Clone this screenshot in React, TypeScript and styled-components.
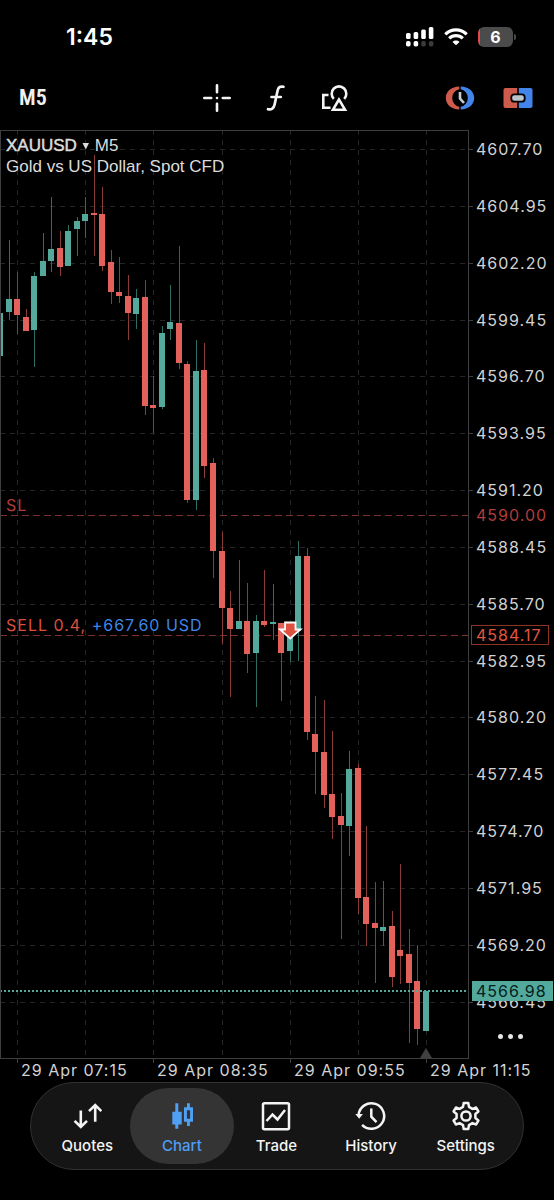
import React from "react";
import styled, { createGlobalStyle } from "styled-components";

const color = {
  bull: "#52a99c",
  bear: "#e2625b",
  bullWick: "#2f6d64",
  bearWick: "#8a3d39",
  frame: "#3c3e40",
  grid: "#232527",
  label: "#d2d2d2",
  accent: "#4f9ff5",
  profit: "#3f86e8",
  sell: "#d9503f",
};

const GlobalStyle = createGlobalStyle`
  * { box-sizing: border-box; }
  html { background: #000; }
  body { margin: 0; background: #000; color: #fff; font-family: Inter, "Liberation Sans", sans-serif; }
  button { appearance: none; border: 0; background: none; padding: 0; margin: 0; color: inherit; font: inherit; cursor: pointer; }
  svg { display: block; }
`;

const Screen = styled.main`
  display: flex;
  flex-direction: column;
  min-height: 100vh;
`;

const StatusBar = styled.header`
  display: flex;
  align-items: center;
  justify-content: space-between;
  height: 74px;
  padding: 0 38px 0 66px;
`;

const Clock = styled.time`
  font-size: 23px;
  line-height: 28px;
  font-weight: 600;
`;

const StatusIcons = styled.div`
  display: flex;
  align-items: center;
  gap: 10px;
`;

const Battery = styled.div`
  display: flex;
  align-items: center;
  gap: 1px;
  &::after {
    content: "";
    width: 2px;
    height: 6px;
    border-radius: 0 2px 2px 0;
    background: #4b4b4b;
  }
`;

const BatteryBody = styled.div`
  width: 35px;
  height: 20px;
  border-radius: 6px;
  background: linear-gradient(to right, #e5484a 2px, #4b4b4b 2px);
  text-align: center;
  font-size: 16px;
  line-height: 20px;
  font-weight: 700;
`;

const Toolbar = styled.nav`
  display: flex;
  align-items: center;
  justify-content: space-between;
  height: 48px;
  margin-bottom: 8px;
  padding: 0 21px 0 19px;
`;

const ToolGroup = styled.div<{ $gap: number }>`
  display: flex;
  align-items: center;
  gap: ${(p) => p.$gap}px;
`;

const SideGroup = styled(ToolGroup)<{ $end?: boolean }>`
  flex: 1 0 0;
  justify-content: ${(p) => (p.$end ? "flex-end" : "flex-start")};
`;

const Timeframe = styled.button`
  font-family: "Roboto Condensed", "Open Sans Condensed", "Arial Narrow", Roboto, sans-serif;
  font-size: 22px;
  line-height: 32px;
  font-weight: 600;
  color: #f0f0f0;
`;

const ChartArea = styled.section`
  position: relative;
`;

const ChartSvg = styled.svg`
  width: 100%;
  height: auto;
  font-family: Inter, sans-serif;
`;

const ChartText = styled.text`
  font-size: 16px;
  letter-spacing: 1px;
`;

const SymbolHeader = styled.div`
  position: absolute;
  top: 5px;
  left: 6px;
  color: #dcdcdc;
  font-family: "Liberation Sans", Arial, sans-serif;
  font-size: 17px;
  line-height: 21px;
`;

const SymbolButton = styled.button`
  display: flex;
  align-items: center;
  gap: 5px;
`;

const SymbolName = styled.span`
  -webkit-text-stroke: 0.5px currentColor;
`;

const MoreButton = styled.button`
  position: absolute;
  right: 29px;
  bottom: 35px;
  display: flex;
  gap: 5px;
  padding: 8px 2px;
`;

const Dot = styled.span`
  width: 5px;
  height: 5px;
  border-radius: 50%;
  background: #e6e6e6;
`;

const TabBar = styled.nav`
  display: grid;
  grid-template-columns: repeat(5, 1fr);
  margin: 0 30px 30px;
  padding: 5px 10px 5px 9px;
  border: 1px solid #313131;
  border-radius: 44px;
  background: #151515;
`;

const Tab = styled.button<{ $active?: boolean }>`
  display: flex;
  flex-direction: column;
  align-items: center;
  justify-content: center;
  gap: 5px;
  height: 76px;
  margin: 0 -5px;
  padding-top: 4px;
  border-radius: 38px;
  background: ${(p) => (p.$active ? "#343434" : "transparent")};
  color: ${(p) => (p.$active ? color.accent : "#f4f4f4")};
  font-size: 15px;
  line-height: 20px;
  font-weight: 500;
`;

/* [high, body top, body bottom, low, rising] in chart units, one entry per 5-minute bar */
type Candle = [number, number, number, number, 0 | 1];
const candles: Candle[] = [
  [313, 313, 356, 356, 1], [240, 299, 312, 320, 1], [272, 299, 315, 334, 0], [309, 317, 331, 331, 0],
  [272, 276, 330, 367, 1], [233, 261, 276, 276, 1], [197, 249, 261, 272, 1], [231, 248, 267, 276, 0],
  [225, 231, 266, 266, 1], [217, 221, 229, 256, 1], [197, 214, 221, 238, 1], [155, 213, 215, 256, 0],
  [187, 214, 266, 271, 0], [250, 262, 292, 304, 0], [257, 292, 296, 303, 0], [275, 296, 313, 340, 0],
  [289, 298, 314, 329, 1], [280, 297, 406, 415, 0], [376, 405, 408, 433, 0], [326, 333, 407, 409, 1],
  [285, 322, 329, 340, 1], [246, 323, 363, 369, 0], [361, 364, 500, 503, 0], [340, 371, 500, 510, 1],
  [343, 370, 466, 478, 0], [458, 463, 551, 578, 0], [532, 551, 608, 644, 0], [591, 608, 629, 697, 0],
  [560, 621, 629, 629, 1], [583, 621, 654, 673, 0], [615, 621, 653, 707, 1], [570, 621, 625, 627, 0],
  [584, 622, 624, 640, 1], [623, 623, 653, 701, 0], [630, 630, 651, 662, 1], [541, 556, 631, 661, 1],
  [548, 556, 732, 740, 0], [696, 734, 752, 794, 0], [700, 752, 795, 808, 0], [731, 794, 817, 839, 0],
  [793, 816, 825, 939, 0], [751, 769, 826, 856, 1], [764, 768, 898, 914, 0], [826, 897, 924, 946, 0],
  [882, 923, 928, 983, 0], [881, 927, 931, 946, 1], [911, 926, 977, 987, 0], [864, 950, 956, 984, 0],
  [929, 954, 983, 1043, 0], [945, 981, 1029, 1045, 0], [991, 991, 1031, 1031, 1],
];

const FRAME = { top: 130, right: 469, bottom: 1058 };
const TOP_PRICE = 4607.7;
const TOP_PRICE_Y = 149;
const STEP_PRICE = 2.75;
const UNITS_PER_DOLLAR = 20.67;
const barX = (i: number) => Math.round(i * 8.52);
const priceY = (p: number) => Math.round(TOP_PRICE_Y + (TOP_PRICE - p) * UNITS_PER_DOLLAR);
const prices = Array.from({ length: 16 }, (_, i) => TOP_PRICE - i * STEP_PRICE);
const gridBars = [2, 10, 18, 26, 34, 42, 50];
const timeLabels = [
  { bar: 2, text: "29 Apr 07:15" },
  { bar: 18, text: "29 Apr 08:35" },
  { bar: 34, text: "29 Apr 09:55" },
  { bar: 50, text: "29 Apr 11:15" },
];

function PriceChart() {
  const sl = priceY(4590);
  const entry = priceY(4584.17);
  const last = priceY(4566.98);
  return (
    <ChartSvg viewBox="0 130 554 952" role="img" aria-label="XAUUSD five minute candlestick chart">
      <g stroke={color.grid} strokeWidth="1" strokeDasharray="5 5" shapeRendering="crispEdges">
        {prices.map((p) => (
          <line key={p} x1="0" x2={FRAME.right} y1={priceY(p) + 0.5} y2={priceY(p) + 0.5} />
        ))}
        {gridBars.map((b) => (
          <line key={b} x1={barX(b) + 0.5} x2={barX(b) + 0.5} y1={FRAME.top} y2={FRAME.bottom} />
        ))}
      </g>
      <g strokeWidth="1" strokeDasharray="7 4" shapeRendering="crispEdges" stroke="#7c3029">
        <line x1="0" x2={FRAME.right} y1={sl + 0.5} y2={sl + 0.5} />
        <line x1="0" x2={FRAME.right} y1={entry + 0.5} y2={entry + 0.5} />
      </g>
      <g shapeRendering="crispEdges">
        {candles.map(([high, top, bottom, low, up], i) => (
          <g key={i}>
            <rect x={barX(i)} y={high} width="1" height={low - high} fill={up ? color.bullWick : color.bearWick} />
            <rect x={barX(i) - 3} y={top} width="6" height={bottom - top} fill={up ? color.bull : color.bear} />
          </g>
        ))}
      </g>
      <line x1="0" x2={FRAME.right} y1={last} y2={last} stroke={color.bull} strokeWidth="2" strokeDasharray="2 2" />
      <g fill="none" stroke={color.frame} shapeRendering="crispEdges">
        <path d="M0.5 130.5H468.5V1058.5H0.5Z" />
        {prices.map((p) => (
          <line key={p} x1="469" x2="473" y1={priceY(p) + 0.5} y2={priceY(p) + 0.5} />
        ))}
        {timeLabels.map(({ bar }) => (
          <line key={bar} x1={barX(bar) + 0.5} x2={barX(bar) + 0.5} y1="1058" y2="1063" />
        ))}
      </g>
      <path d="M420 1058L426 1048L432 1058Z" fill="#404040" />
      <path
        d="M285 622.500H295.500V629.500H300.500L290.200 638.500L280 629.500H285Z"
        fill="#e0503f"
        stroke="#fff"
        strokeWidth="1.800"
      />
      <g fill={color.label}>
        {prices.map((p) => (
          <ChartText key={p} x="476" y={priceY(p) + 6}>{p.toFixed(2)}</ChartText>
        ))}
        {timeLabels.map(({ bar, text }) => (
          <ChartText key={bar} x={barX(bar) + 4} y="1076">{text}</ChartText>
        ))}
      </g>
      <ChartText x="476" y={sl + 6} fill="#b23c3a">4590.00</ChartText>
      <rect x="471.500" y={entry - 9.5} width="77" height="19" fill="#000" stroke="#8f3424" />
      <ChartText x="476" y={entry + 6} fill="#e2563f">4584.17</ChartText>
      <rect x="472" y={last - 10} width="81" height="20" fill={color.bull} />
      <ChartText x="476" y={last + 6} fill="#04211d">4566.98</ChartText>
      <ChartText x="6" y={sl - 4} fill="#b23c3a">SL</ChartText>
      <ChartText x="6" y={entry - 4} fill={color.sell}>
        SELL 0.4, <tspan fill={color.profit}>+667.60 USD</tspan>
      </ChartText>
    </ChartSvg>
  );
}

const SignalIcon = () => (
  <svg width="28" height="20" viewBox="0 0 28 20" fill="#fff" aria-label="Signal">
    <rect x="0" y="6" width="4.600" height="6" rx="1.500" />
    <rect x="7.600" y="5" width="4.600" height="7" rx="1.500" />
    <rect x="15.200" y="2.500" width="4.600" height="9.500" rx="1.500" />
    <rect x="22.800" y="0" width="4.600" height="12" rx="1.500" />
    <rect x="0" y="14" width="4.600" height="5.500" rx="1.800" />
    <rect x="7.600" y="14" width="4.600" height="5.500" rx="1.800" />
    <rect x="15.200" y="14" width="4.600" height="5.500" rx="1.800" fill="#3a3a3a" />
    <rect x="22.800" y="14" width="4.600" height="5.500" rx="1.800" fill="#3a3a3a" />
  </svg>
);

const WifiIcon = () => (
  <svg width="24" height="18" viewBox="0 0 24 18" fill="none" stroke="#fff" strokeWidth="3.200" aria-label="Wi-Fi">
    <path d="M1.300 6.300C7.300 0.300 16.700 0.300 22.700 6.300" />
    <path d="M5.200 10.400C9 6.700 15 6.700 18.800 10.400" />
    <path d="M12 17.300L8.500 13.900C10.500 12 13.500 12 15.500 13.900Z" fill="#fff" stroke="none" />
  </svg>
);

const CrosshairIcon = () => (
  <svg width="28" height="28" viewBox="0 0 28 28" stroke="#f4f4f4" strokeWidth="2.600" strokeLinecap="round">
    <path d="M14 1.300V8.200M14 19.800V26.700M1.300 14H8.200M19.800 14H26.700M14 14V14.010" />
  </svg>
);

const FunctionIcon = () => (
  <svg width="20" height="28" viewBox="0 0 20 28" fill="none" stroke="#f4f4f4" strokeWidth="2.700" strokeLinecap="round">
    <path d="M17.500 2.800C14 2 12.300 3.300 11.500 7L8.600 20.500C7.700 24.500 5.500 26 2 25.200" />
    <path d="M5.500 13H14.800" />
  </svg>
);

const ObjectsIcon = () => (
  <svg width="28" height="28" viewBox="0 0 28 28" fill="none" stroke="#f4f4f4" strokeWidth="2.600">
    <path d="M7.500 11H2.300V23.700H9.500" />
    <path d="M12.800 14.800A7.300 7.300 0 1 1 23.200 14.800" />
    <path d="M18 15.500L12 25.700H24Z" />
  </svg>
);

const SessionIcon = () => (
  <svg width="30" height="24" viewBox="0 0 30 24" fill="none">
    <path d="M14.300 0.500C6.500 0.500 0.800 5.500 0.800 12C0.800 18.500 6.500 23.500 14.300 23.500V20.800A9 9 0 0 1 14.300 3.200Z" fill="#cf5b4d" />
    <path d="M15.700 0.500C23.500 0.500 29.200 5.500 29.200 12C29.200 18.500 23.500 23.500 15.700 23.500V20.800A9 9 0 0 0 15.700 3.200Z" fill="#4384ea" />
    <path d="M15 6V12.500L19 17" stroke="#c4cbd2" strokeWidth="2.600" />
  </svg>
);

const TradeTicketIcon = () => (
  <svg width="30" height="22" viewBox="0 0 30 22">
    <path d="M2.500 1H14.200V21H2.500A2 2 0 0 1 0.500 19V3A2 2 0 0 1 2.500 1Z" fill="#cf5b4d" />
    <path d="M15.800 1H27.500A2 2 0 0 1 29.500 3V19A2 2 0 0 1 27.500 21H15.800Z" fill="#4384ea" />
    <rect x="8.300" y="7.300" width="13.400" height="7.400" rx="3" fill="#bcc3ca" stroke="#000" strokeWidth="1.800" />
  </svg>
);

const QuotesIcon = () => (
  <svg width="30" height="30" viewBox="0 0 30 30" fill="none" stroke="currentColor" strokeWidth="2.600">
    <path d="M8.800 9.500V26M2.600 19.800L8.800 26L15 19.800" />
    <path d="M23.200 20.700V4M17 10.200L23.200 4L29.400 10.200" />
  </svg>
);

const ChartIcon = () => (
  <svg width="30" height="30" viewBox="0 0 30 30" fill="currentColor">
    <path d="M8.300 2.300H11.300V10.700H14.700V23.500H11.300V27.700H8.300V23.500H5.300V10.700H8.300Z" />
    <path d="M20 2.300H22.900V6.300H26V20.700H22.900V25H20V20.700H17V6.300H20ZM19.900 9.300V17.700H23.100V9.300Z" fillRule="evenodd" />
  </svg>
);

const TradeIcon = () => (
  <svg width="30" height="30" viewBox="0 0 30 30" fill="none" stroke="currentColor" strokeWidth="2.500">
    <rect x="2" y="2.200" width="26" height="26" rx="1.500" />
    <path d="M5.500 20L11.500 13.500L16.500 18.500L24 9" />
  </svg>
);

const HistoryIcon = () => (
  <svg width="30" height="30" viewBox="0 0 30 30" fill="none" stroke="currentColor" strokeWidth="2.500" overflow="visible">
    <path d="M2.600 14A12.800 12.800 0 1 1 6.100 23.900" />
    <path d="M-0.700 13L3.200 17.800L6.900 13Z" fill="currentColor" stroke="none" />
    <path d="M15.300 7.500V15.700L20.500 21.200" />
  </svg>
);

const SettingsIcon = () => {
  const teeth = 6;
  const point = (deg: number, r: number) => {
    const a = (deg * Math.PI) / 180;
    return `${(15 + r * Math.sin(a)).toFixed(2)} ${(15 - r * Math.cos(a)).toFixed(2)}`;
  };
  const outline = Array.from({ length: teeth }, (_, i) => {
    const c = i * 60;
    return [point(c - 18, 9.6), point(c - 10, 13.2), point(c + 10, 13.2), point(c + 18, 9.6)];
  }).flat();
  return (
    <svg width="30" height="30" viewBox="0 0 30 30" fill="none" stroke="currentColor" strokeWidth="2.500" strokeLinejoin="round">
      <path d={`M${outline.join("L")}Z`} />
      <circle cx="15" cy="15" r="4.600" />
    </svg>
  );
};

const tabs = [
  { name: "Quotes", Icon: QuotesIcon },
  { name: "Chart", Icon: ChartIcon },
  { name: "Trade", Icon: TradeIcon },
  { name: "History", Icon: HistoryIcon },
  { name: "Settings", Icon: SettingsIcon },
];

export default function App() {
  return (
    <Screen>
      <GlobalStyle />
      <StatusBar>
        <Clock>1:45</Clock>
        <StatusIcons>
          <SignalIcon />
          <WifiIcon />
          <Battery>
            <BatteryBody>6</BatteryBody>
          </Battery>
        </StatusIcons>
      </StatusBar>
      <Toolbar aria-label="Chart tools">
        <SideGroup $gap={0}>
          <Timeframe>M5</Timeframe>
        </SideGroup>
        <ToolGroup $gap={35}>
          <button aria-label="Crosshair"><CrosshairIcon /></button>
          <button aria-label="Indicators"><FunctionIcon /></button>
          <button aria-label="Objects"><ObjectsIcon /></button>
        </ToolGroup>
        <SideGroup $gap={28} $end>
          <button aria-label="Trading sessions"><SessionIcon /></button>
          <button aria-label="One click trading"><TradeTicketIcon /></button>
        </SideGroup>
      </Toolbar>
      <ChartArea>
        <PriceChart />
        <SymbolHeader>
          <SymbolButton>
            <SymbolName>XAUUSD</SymbolName>
            <svg width="8" height="8" viewBox="0 0 8 8" fill="currentColor" aria-hidden="true">
              <path d="M0.500 1H7L3.800 7.500Z" />
            </svg>
            <span>M5</span>
          </SymbolButton>
          <div>Gold vs US Dollar, Spot CFD</div>
        </SymbolHeader>
        <MoreButton aria-label="More">
          <Dot />
          <Dot />
          <Dot />
        </MoreButton>
      </ChartArea>
      <TabBar aria-label="Main">
        {tabs.map(({ name, Icon }) => (
          <Tab key={name} $active={name === "Chart"} aria-current={name === "Chart" ? "page" : undefined}>
            <Icon />
            {name}
          </Tab>
        ))}
      </TabBar>
    </Screen>
  );
}
